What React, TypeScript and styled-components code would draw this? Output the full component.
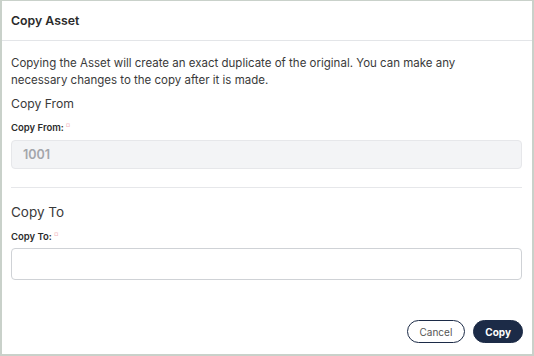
import styled, { createGlobalStyle } from 'styled-components';

const GlobalStyle = createGlobalStyle`
  html, body {
    margin: 0;
    padding: 0;
    background: #fff;
  }
  * {
    box-sizing: border-box;
  }
`;

const App = () => {
  return (
    <>
      <GlobalStyle />
      <StyledFrame>
        <StyledHeader>
          <StyledTitle>Copy Asset</StyledTitle>
        </StyledHeader>
        <StyledBody>
          <StyledIntro>
            Copying the Asset will create an exact duplicate of the original. You can make any
            <br />
            necessary changes to the copy after it is made.
          </StyledIntro>
          <StyledSectionTitle $top="6px" $size="12.2px">
            Copy From
          </StyledSectionTitle>
          <StyledLabel $top="9px">
            Copy From:<StyledRequired>¤</StyledRequired>
          </StyledLabel>
          <StyledInput $disabled value="1001" readOnly />
          <StyledDivider />
          <StyledSectionTitle $top="16px" $size="13.5px">
            Copy To
          </StyledSectionTitle>
          <StyledLabel $top="9px">
            Copy To:<StyledRequired>¤</StyledRequired>
          </StyledLabel>
          <StyledInput defaultValue="" />
        </StyledBody>
        <StyledFooter>
          <StyledButton>Cancel</StyledButton>
          <StyledButton $primary>Copy</StyledButton>
        </StyledFooter>
      </StyledFrame>
    </>
  );
};

export default App;

const StyledFrame = styled.div`
  width: 534px;
  height: 356px;
  border: 2px solid #c9d1ca;
  border-top-width: 1px;
  background: #fff;
  display: flex;
  flex-direction: column;
  font-family: Inter, 'Liberation Sans', sans-serif;
  color: #333;
`;

const StyledHeader = styled.div`
  height: 40px;
  padding: 0 9px;
  display: flex;
  align-items: center;
  border-bottom: 1px solid #e3e5e8;
`;

const StyledTitle = styled.h1`
  margin: 0;
  font-size: 12.3px;
  font-weight: 600;
  color: #2b2b2b;
`;

const StyledBody = styled.div`
  padding: 14px 10px 0 9px;
  display: flex;
  flex-direction: column;
`;

const StyledIntro = styled.p`
  margin: 0;
  font-size: 11.5px;
  line-height: 17px;
  color: #3a3a3a;
`;

const StyledSectionTitle = styled.h2<{ $top: string; $size: string }>`
  margin: ${(props) => props.$top} 0 0;
  font-size: ${(props) => props.$size};
  line-height: 17px;
  font-weight: 400;
  color: #3a3a3a;
`;

const StyledLabel = styled.label<{ $top: string }>`
  margin-top: ${(props) => props.$top};
  font-size: 9.5px;
  line-height: 13px;
  font-weight: 600;
  color: #2b2b2b;
  display: flex;
  align-items: flex-start;
`;

const StyledRequired = styled.span`
  font-size: 6px;
  line-height: 7px;
  color: #f2b8c0;
  margin-left: 2px;
`;

const StyledInput = styled.input<{ $disabled?: boolean }>`
  margin-top: ${(props) => (props.$disabled ? '6px' : '5px')};
  width: 100%;
  height: ${(props) => (props.$disabled ? '29px' : '32px')};
  padding: 0 11px;
  border-radius: 4px;
  border: 1px solid ${(props) => (props.$disabled ? '#e6e7ea' : '#cfd2d6')};
  background: ${(props) => (props.$disabled ? '#f3f4f6' : '#fff')};
  font-family: inherit;
  font-size: 12.5px;
  font-weight: 600;
  color: #a3a6ab;
  outline: none;
`;

const StyledDivider = styled.hr`
  margin: 18px 0 0;
  border: 0;
  border-top: 1px solid #e6e7ea;
`;

const StyledFooter = styled.div`
  margin-top: auto;
  padding: 0 9px 11px;
  display: flex;
  justify-content: flex-end;
  gap: 8px;
`;

const StyledButton = styled.button<{ $primary?: boolean }>`
  height: 23px;
  padding: 0 ${(props) => (props.$primary ? '11px' : '12px')};
  border-radius: 12px;
  border: 1px solid #1c2b47;
  background: ${(props) => (props.$primary ? '#1c2b47' : '#fff')};
  color: ${(props) => (props.$primary ? '#fff' : '#555')};
  font-family: inherit;
  font-size: 10px;
  font-weight: ${(props) => (props.$primary ? 700 : 400)};
  cursor: pointer;
`;
